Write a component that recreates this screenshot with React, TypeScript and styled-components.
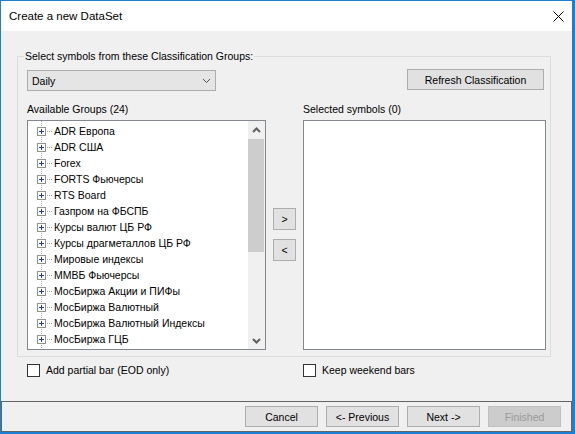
import React from 'react'
import styled, { createGlobalStyle } from 'styled-components'

const GlobalStyle = createGlobalStyle`
  html, body {
    margin: 0;
    padding: 0;
    background: #ffffff;
  }
  * {
    box-sizing: border-box;
  }
  body {
    font-family: 'Liberation Sans', Arial, sans-serif;
    font-size: 10.5px;
    color: #000000;
  }
`

const Window = styled.div`
  width: 575px;
  height: 434px;
  display: flex;
  flex-direction: column;
  border-style: solid;
  border-color: #1c7fd4;
  border-width: 1px 3px 2px 1px;
  background: #f0f0f0;
`

const TitleBar = styled.div`
  flex: none;
  height: 30px;
  display: flex;
  align-items: center;
  justify-content: space-between;
  padding: 0 8px 0 8px;
  background: #ffffff;
`

const Title = styled.span`
  font-size: 11.5px;
  color: #000000;
`

const Body = styled.div`
  flex: 1;
  padding: 19px 21px 0 16px;
`

const GroupBox = styled.fieldset`
  margin: 0;
  min-inline-size: 0;
  border: 1px solid #dcdcdc;
  padding: 6px 4px 6px 9px;
`

const GroupLegend = styled.legend`
  margin-left: -3px;
  padding: 0 1px;
  line-height: 13px;
`

const TopRow = styled.div`
  height: 22px;
  display: flex;
  align-items: flex-start;
  justify-content: space-between;
`

const Combo = styled.div`
  width: 189px;
  height: 21px;
  margin-top: 1px;
  display: flex;
  align-items: center;
  justify-content: space-between;
  padding: 0 4px 0 4px;
  border: 1px solid #adadad;
  background: #e5e5e5;
`

const Button = styled.button<{ $width: number; $disabled?: boolean }>`
  width: ${p => p.$width}px;
  height: 21px;
  padding: 0;
  margin: 0;
  font-family: inherit;
  font-size: 10.5px;
  color: ${p => (p.$disabled ? '#9a9a9a' : '#000000')};
  background: ${p => (p.$disabled ? '#cccccc' : '#e1e1e1')};
  border: 1px solid ${p => (p.$disabled ? '#bfbfbf' : '#adadad')};
  border-radius: 0;
`

const RefreshButton = styled(Button)`
  margin-right: 2px;
`

const ListsGrid = styled.div`
  margin-top: 12px;
  display: grid;
  grid-template-columns: 239px 37px 243px;
  grid-template-rows: 13px 230px;
  row-gap: 4px;
`

const ListLabel = styled.div<{ $col: number }>`
  grid-column: ${p => p.$col};
  grid-row: 1;
  line-height: 13px;
`

const TreeBox = styled.div`
  grid-column: 1;
  grid-row: 2;
  display: flex;
  border: 1px solid #828790;
  background: #ffffff;
  overflow: hidden;
`

const TreeItems = styled.div`
  flex: 1;
  padding-top: 2px;
  overflow: hidden;
  background-image: linear-gradient(to bottom, #a0a0a0 50%, transparent 50%);
  background-size: 1px 2px;
  background-repeat: repeat-y;
  background-position: 13px 12px;
`

const TreeRow = styled.div`
  height: 16px;
  display: flex;
  align-items: center;
  padding-left: 9px;
  white-space: nowrap;
`

const Expander = styled.span`
  flex: none;
  width: 9px;
  height: 9px;
  display: flex;
  align-items: center;
  justify-content: center;
  border: 1px solid #919191;
  background: #ffffff;
`

const Stub = styled.span`
  flex: none;
  width: 5px;
  margin: 0 2px 0 1px;
  border-top: 1px dotted #a0a0a0;
`

const ScrollBar = styled.div`
  flex: none;
  width: 17px;
  display: flex;
  flex-direction: column;
  background: #f0f0f0;
`

const ScrollArrow = styled.div`
  flex: none;
  height: 17px;
  display: flex;
  align-items: center;
  justify-content: center;
`

const ScrollTrack = styled.div`
  flex: 1;
  padding-top: 1px;
`

const ScrollThumb = styled.div`
  height: 113px;
  margin-right: 1px;
  background: #cdcdcd;
`

const ArrowColumn = styled.div`
  grid-column: 2;
  grid-row: 2;
  display: flex;
  flex-direction: column;
  justify-content: center;
  gap: 9px;
  padding-left: 7px;
  padding-bottom: 1px;
`

const MoveButton = styled(Button)`
  height: 22px;
`

const SelectedBox = styled.div`
  grid-column: 3;
  grid-row: 2;
  border: 1px solid #828790;
  background: #ffffff;
`

const CheckRow = styled.div`
  margin-top: 6px;
  padding-left: 10px;
  display: grid;
  grid-template-columns: 276px 1fr;
`

const CheckItem = styled.label`
  display: flex;
  align-items: center;
  gap: 6px;
  height: 15px;
  line-height: 15px;
  white-space: nowrap;
`

const CheckBox = styled.span`
  flex: none;
  width: 13px;
  height: 13px;
  border: 1px solid #333333;
  background: #ffffff;
`

const Footer = styled.div`
  flex: none;
  height: 31px;
  display: flex;
  justify-content: flex-end;
  align-items: flex-start;
  gap: 8px;
  padding: 4px 10px 0 0;
  border: 1px solid #646464;
`

// only the rows that fit in the visible part of the tree
const groups = [
  'ADR Европа',
  'ADR США',
  'Forex',
  'FORTS Фьючерсы',
  'RTS Board',
  'Газпром на ФБСПБ',
  'Курсы валют ЦБ РФ',
  'Курсы драгметаллов ЦБ РФ',
  'Мировые индексы',
  'ММВБ Фьючерсы',
  'МосБиржа Акции и ПИФы',
  'МосБиржа Валютный',
  'МосБиржа Валютный Индексы',
  'МосБиржа ГЦБ'
]

const Chevron = ({ up, thin }: { up?: boolean; thin?: boolean }): JSX.Element => (
  <svg width='9' height='6' viewBox='0 0 9 6'>
    <polyline
      points={up ? '1,5 4.5,1.5 8,5' : '1,1 4.5,4.5 8,1'}
      fill='none'
      stroke={thin ? '#505050' : '#606060'}
      strokeWidth={thin ? 1 : 2}
    />
  </svg>
)

const PlusIcon = (): JSX.Element => (
  <svg width='7' height='7' viewBox='0 0 7 7'>
    <path d='M1 3.5h5M3.5 1v5' stroke='#1f3f7f' strokeWidth='1' />
  </svg>
)

const App = (): JSX.Element => {
  return (
    <>
      <GlobalStyle />
      <Window>
        <TitleBar>
          <Title>Create a new DataSet</Title>
          <svg width='11' height='11' viewBox='0 0 11 11'>
            <path d='M0.5 0.5L10.5 10.5M10.5 0.5L0.5 10.5' stroke='#000000' strokeWidth='1' />
          </svg>
        </TitleBar>
        <Body>
          <GroupBox>
            <GroupLegend>Select symbols from these Classification Groups:</GroupLegend>
            <TopRow>
              <Combo>
                <span>Daily</span>
                <Chevron thin />
              </Combo>
              <RefreshButton $width={137}>Refresh Classification</RefreshButton>
            </TopRow>
            <ListsGrid>
              <ListLabel $col={1}>Available Groups (24)</ListLabel>
              <ListLabel $col={3}>Selected symbols (0)</ListLabel>
              <TreeBox>
                <TreeItems>
                  {groups.map(name => (
                    <TreeRow key={name}>
                      <Expander><PlusIcon /></Expander>
                      <Stub />
                      <span>{name}</span>
                    </TreeRow>
                  ))}
                </TreeItems>
                <ScrollBar>
                  <ScrollArrow><Chevron up /></ScrollArrow>
                  <ScrollTrack>
                    <ScrollThumb />
                  </ScrollTrack>
                  <ScrollArrow><Chevron /></ScrollArrow>
                </ScrollBar>
              </TreeBox>
              <ArrowColumn>
                <MoveButton $width={23}>&gt;</MoveButton>
                <MoveButton $width={23}>&lt;</MoveButton>
              </ArrowColumn>
              <SelectedBox />
            </ListsGrid>
          </GroupBox>
          <CheckRow>
            <CheckItem>
              <CheckBox />
              Add partial bar (EOD only)
            </CheckItem>
            <CheckItem>
              <CheckBox />
              Keep weekend bars
            </CheckItem>
          </CheckRow>
        </Body>
        <Footer>
          <Button $width={73}>Cancel</Button>
          <Button $width={73}>&lt;- Previous</Button>
          <Button $width={73}>Next -&gt;</Button>
          <Button $width={73} $disabled>Finished</Button>
        </Footer>
      </Window>
    </>
  )
}

export default App
